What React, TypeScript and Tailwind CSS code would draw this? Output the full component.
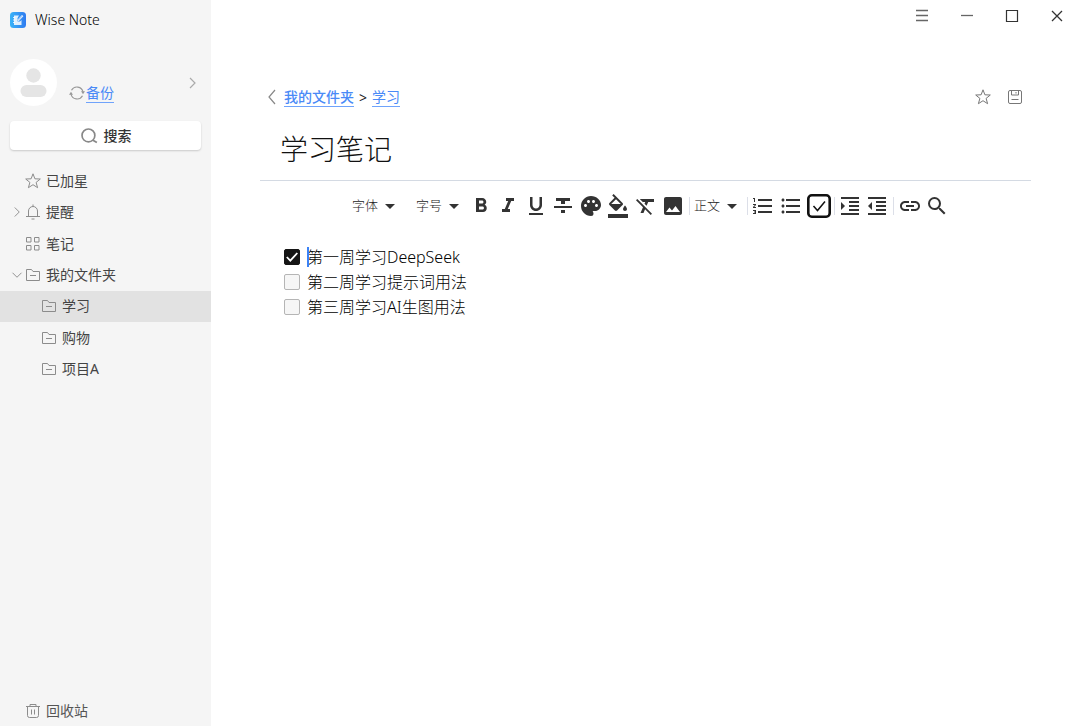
import { useState, type ReactNode } from "react";
import {
  MdArrowDropDown,
  MdFormatBold,
  MdFormatClear,
  MdFormatColorFill,
  MdFormatIndentDecrease,
  MdFormatIndentIncrease,
  MdFormatItalic,
  MdFormatListBulleted,
  MdFormatListNumbered,
  MdFormatStrikethrough,
  MdFormatUnderlined,
  MdImage,
  MdLink,
  MdPalette,
  MdSearch,
} from "react-icons/md";

type LineIconProps = { children: ReactNode; className?: string };

function LineIcon({ children, className = "size-4" }: LineIconProps) {
  return (
    <svg
      viewBox="0 0 16 16"
      fill="none"
      stroke="currentColor"
      strokeWidth="1"
      aria-hidden="true"
      className={`shrink-0 ${className}`}
    >
      {children}
    </svg>
  );
}

const StarIcon = () => (
  <LineIcon>
    <path d="M8 .8 9.9 5.8 15.3 6 11.1 9.4 12.6 14.7 8 11.7 3.4 14.7 4.9 9.4 .7 6 6.1 5.8Z" />
  </LineIcon>
);

const BellIcon = () => (
  <LineIcon>
    <path d="M3.500 12.500V7a4.500 4.500 0 0 1 9 0v5.500M1 12.500h14M8 .5v2M6.500 15h3" />
  </LineIcon>
);

const GridIcon = () => (
  <LineIcon>
    <path d="M1.500 1.500h4.500v4.500H1.500ZM9.500 1.500h4.500v4.500H9.500ZM1.500 9.500h4.500v4.500H1.500ZM9.500 9.500h4.500v4.500H9.500Z" />
  </LineIcon>
);

const FolderIcon = () => (
  <LineIcon>
    <path d="M1.500 13.500v-11h5l1.500 2h6.500v9ZM5 8.500h6" />
  </LineIcon>
);

const TrashIcon = () => (
  <LineIcon>
    <path d="M1 3.500h14M5 3.500v-2h6v2M2.500 3.500v9a2 2 0 0 0 2 2h7a2 2 0 0 0 2-2v-9M6.500 6.500v5M9.500 6.500v5" />
  </LineIcon>
);

const SaveIcon = () => (
  <LineIcon>
    <rect x="1.500" y="1.500" width="13" height="13" rx="1.500" />
    <path d="M4.500 1.500v4.500h7v-4.500M9 3v1.500M4.500 10.500h7" />
  </LineIcon>
);

const SyncIcon = () => (
  <LineIcon>
    <path d="M2.500 5.200A6.200 6.200 0 0 1 14 7M13.500 10.800A6.200 6.200 0 0 1 2 9" strokeWidth="1.200" />
    <path d="M12 6.300h4L14 9.200ZM0 9.700H4L2 6.800Z" fill="currentColor" stroke="none" />
  </LineIcon>
);

const SearchIcon = () => (
  <LineIcon className="size-[18px]">
    <circle cx="7.500" cy="7.500" r="5.700" strokeWidth="1.500" />
    <path d="m11.500 11.800 3.500 2" strokeWidth="1.600" />
  </LineIcon>
);

const ChevronIcon = ({ d, className }: { d: string; className: string }) => (
  <LineIcon className={className}>
    <path d={d} strokeWidth="1.200" />
  </LineIcon>
);

const right = "m5 2 6 6-6 6";
const smallRight = "m5 3 5 5-5 5";
const down = "m2 5 6 6 6-6";
const left = "M11 1 5 8l6 7";

function Logo() {
  return (
    <svg viewBox="0 0 16 16" className="size-4" aria-hidden="true">
      <defs>
        <linearGradient id="logo" x1="0" x2="1">
          <stop offset="0" stopColor="#39b3f8" />
          <stop offset="1" stopColor="#2f7bf0" />
        </linearGradient>
      </defs>
      <rect width="16" height="16" rx="3.500" fill="url(#logo)" />
      <path d="M4 3.500h5L7.500 6v3.500H10l1.500-1.500v5H4Z" fill="#fff" fillOpacity=".85" />
      <path d="m7.500 9.500.5-2.200L12 3l1.300 1.200-4 4.300Z" fill="#fff" />
      <path d="M3 5.500h2M3 8h2M3 10.500h2" stroke="#fff" strokeWidth=".8" />
      <path d="m8 8.500 4-4.300" stroke="#368cf3" strokeWidth=".6" />
    </svg>
  );
}

type NavItem = { label: string; icon: ReactNode; chevron?: "right" | "down"; child?: boolean };

const navItems: NavItem[] = [
  { label: "已加星", icon: <StarIcon /> },
  { label: "提醒", icon: <BellIcon />, chevron: "right" },
  { label: "笔记", icon: <GridIcon /> },
  { label: "我的文件夹", icon: <FolderIcon />, chevron: "down" },
  { label: "学习", icon: <FolderIcon />, child: true },
  { label: "购物", icon: <FolderIcon />, child: true },
  { label: "项目A", icon: <FolderIcon />, child: true },
];

function Sidebar() {
  const [selected, setSelected] = useState("学习");
  return (
    <aside className="flex w-[211px] shrink-0 flex-col bg-[#f5f5f5]">
      <header className="flex h-10 items-center gap-[9px] px-[10px] text-sm font-light text-black">
        <Logo />
        <span>Wise Note</span>
      </header>

      <div className="mt-[19px] flex h-[47px] items-center px-[10px]">
        <svg viewBox="0 0 47 47" className="size-[47px]" aria-hidden="true">
          <circle cx="23.500" cy="23.500" r="23.500" fill="#fff" />
          <circle cx="23.500" cy="16.500" r="7.200" fill="#e5e5e5" />
          <rect x="10.500" y="26" width="26" height="12" rx="6" fill="#e5e5e5" />
        </svg>
        <div className="ml-3 flex items-center gap-px self-end pb-[3px] text-[#999]">
          <SyncIcon />
          <a href="#backup" className="border-b border-[#6fa3fb] text-sm leading-[19px] text-[#4a8af7]">
            备份
          </a>
        </div>
        <button type="button" aria-label="账户" className="ml-auto text-[#aaa]">
          <ChevronIcon d={smallRight} className="size-4" />
        </button>
      </div>

      <button
        type="button"
        className="mx-[10px] mt-[15px] flex h-[29px] items-center justify-center gap-1.5 rounded bg-white text-sm font-medium text-[#333] shadow-[0_1px_2px_rgba(0,0,0,0.18)]"
      >
        <span className="text-[#888]">
          <SearchIcon />
        </span>
        搜索
      </button>

      <nav className="mt-[15px] flex h-[220px] flex-col">
        {navItems.map((item) => (
          <button
            key={item.label}
            type="button"
            onClick={() => setSelected(item.label)}
            className={`flex flex-1 items-center text-left text-sm text-[#444] ${
              item.child ? "pl-[41px]" : "pl-[11px]"
            } ${selected === item.label ? "bg-[#e2e2e2]" : ""}`}
          >
            {!item.child && (
              <span className="w-[14px] text-[#888]">
                {item.chevron && (
                  <ChevronIcon d={item.chevron === "right" ? right : down} className="size-3" />
                )}
              </span>
            )}
            <span className="mr-[5px] text-[#8c8c8c]">{item.icon}</span>
            {item.label}
          </button>
        ))}
      </nav>

      <button type="button" className="mt-auto flex h-[31px] items-center gap-[5px] pl-[25px] text-sm text-[#555]">
        <span className="text-[#8c8c8c]">
          <TrashIcon />
        </span>
        回收站
      </button>
    </aside>
  );
}

function ToolSelect({ label, children }: { label: string; children: string }) {
  return (
    <button
      type="button"
      aria-label={label}
      className="flex items-center text-[13px] font-light text-[#222]"
    >
      {children}
      <MdArrowDropDown className="size-6 text-[#333]" />
    </button>
  );
}

function Tool({ label, children }: { label: string; children: ReactNode }) {
  return (
    <button type="button" aria-label={label} className="flex flex-1 items-center justify-center">
      {children}
    </button>
  );
}

const Divider = () => <span className="h-[18px] w-px bg-[#dcdfe8]" />;

function Toolbar() {
  return (
    <div role="toolbar" className="flex h-[50px] items-center pl-[92px] text-[#333]">
      <ToolSelect label="字体">字体</ToolSelect>
      <span className="w-[14px]" />
      <ToolSelect label="字号">字号</ToolSelect>
      <div className="ml-px flex w-[220px]">
        <Tool label="加粗"><MdFormatBold className="size-6" /></Tool>
        <Tool label="斜体"><MdFormatItalic className="size-6" /></Tool>
        <Tool label="下划线"><MdFormatUnderlined className="size-6" /></Tool>
        <Tool label="删除线"><MdFormatStrikethrough className="size-6" /></Tool>
        <Tool label="文字颜色"><MdPalette className="size-6" /></Tool>
        <Tool label="填充颜色"><MdFormatColorFill className="size-6" /></Tool>
        <Tool label="清除格式"><MdFormatClear className="size-6" /></Tool>
        <Tool label="图片"><MdImage className="size-6" /></Tool>
      </div>
      <span className="w-0.5" />
      <Divider />
      <span className="w-1" />
      <ToolSelect label="段落样式">正文</ToolSelect>
      <span className="w-[3px]" />
      <Divider />
      <div className="ml-px flex w-[84px]">
        <Tool label="编号列表"><MdFormatListNumbered className="size-6" /></Tool>
        <Tool label="项目符号列表"><MdFormatListBulleted className="size-6" /></Tool>
        <Tool label="待办列表">
          <svg viewBox="0 0 24 24" fill="none" stroke="#111" className="size-6" aria-hidden="true">
            <rect x="1.300" y="1.300" width="21.400" height="21.400" rx="3.500" strokeWidth="2.600" />
            <path d="m6.500 12 4 4.500 7.500-9" strokeWidth="1.500" />
          </svg>
        </Tool>
      </div>
      <span className="w-px" />
      <Divider />
      <div className="ml-px flex w-[55px]">
        <Tool label="增加缩进"><MdFormatIndentIncrease className="size-6" /></Tool>
        <Tool label="减少缩进"><MdFormatIndentDecrease className="size-6" /></Tool>
      </div>
      <span className="w-0.5" />
      <Divider />
      <div className="ml-0.5 flex w-[55px]">
        <Tool label="链接"><MdLink className="size-6" /></Tool>
        <Tool label="查找"><MdSearch className="size-6" /></Tool>
      </div>
    </div>
  );
}

function TodoList() {
  const [items, setItems] = useState([
    { text: "第一周学习DeepSeek", done: true },
    { text: "第二周学习提示词用法", done: false },
    { text: "第三周学习AI生图用法", done: false },
  ]);
  const toggle = (index: number) =>
    setItems(items.map((item, i) => (i === index ? { ...item, done: !item.done } : item)));

  return (
    <ul className="mt-[14px] flex h-[74px] flex-col pl-6 text-base text-black">
      {items.map((item, index) => (
        <li key={item.text} className="flex flex-1 items-center">
          <label className="flex items-center">
            <span className="relative mr-[7px] flex">
              <input
                type="checkbox"
                checked={item.done}
                onChange={() => toggle(index)}
                className="size-4 appearance-none rounded-xs border border-[#b5b5b5] bg-[#f6f6f6] checked:border-[#151515] checked:bg-[#151515]"
              />
              {item.done && (
                <svg
                  viewBox="0 0 16 16"
                  fill="none"
                  stroke="#fff"
                  strokeWidth="1.800"
                  className="pointer-events-none absolute inset-0"
                  aria-hidden="true"
                >
                  <path d="m2.800 8 3.500 3.700L13.300 4" />
                </svg>
              )}
            </span>
            <span className="relative font-light">
              {index === 0 && <span className="absolute inset-y-0.5 left-0 w-0.5 bg-[#3b82f6]" />}
              {item.text}
            </span>
          </label>
        </li>
      ))}
    </ul>
  );
}

function WindowControls() {
  return (
    <div className="flex h-8 items-center justify-end gap-[29px] pr-[15px] text-[#333]">
      <button type="button" aria-label="菜单" className="text-[#666]">
        <LineIcon><path d="M2 2.500h12M2 7.500h12M2 12.500h12" strokeWidth="1.300" /></LineIcon>
      </button>
      <button type="button" aria-label="最小化" className="text-[#666]">
        <LineIcon><path d="M2 7.500h12" strokeWidth="1.300" /></LineIcon>
      </button>
      <button type="button" aria-label="最大化">
        <LineIcon><path d="M2.500 2.500h11v11h-11Z" strokeWidth="1.200" /></LineIcon>
      </button>
      <button type="button" aria-label="关闭">
        <LineIcon><path d="m3 3 10 10M13 3 3 13" strokeWidth="1.300" /></LineIcon>
      </button>
    </div>
  );
}

export default function App() {
  return (
    <div className="flex min-h-screen bg-white font-['Noto_Sans','Noto_Sans_CJK_SC',sans-serif]">
      <Sidebar />
      <main className="min-w-0 flex-1">
        <WindowControls />
        <div className="px-[49px] pt-[52px]">
          <div className="flex h-[26px] items-center pl-1 pr-2">
            <button type="button" aria-label="返回" className="mr-1 text-[#888]">
              <ChevronIcon d={left} className="size-4" />
            </button>
            <div className="flex items-center gap-[5px] text-sm leading-[19px]">
              <a href="#folders" className="border-b border-[#6fa3fb] font-medium text-[#4a8af7]">
                我的文件夹
              </a>
              <span className="text-[#222]">&gt;</span>
              <a href="#study" className="border-b border-[#6fa3fb] text-[#4a8af7]">
                学习
              </a>
            </div>
            <div className="ml-auto flex gap-4 text-[#777]">
              <button type="button" aria-label="加星">
                <StarIcon />
              </button>
              <button type="button" aria-label="保存">
                <SaveIcon />
              </button>
            </div>
          </div>
          <h1 className="flex h-[71px] items-center border-b border-[#d4dae3] pl-5 pt-[7px] text-[28px] font-light text-[#111]">
            学习笔记
          </h1>
          <Toolbar />
          <TodoList />
        </div>
      </main>
    </div>
  );
}
